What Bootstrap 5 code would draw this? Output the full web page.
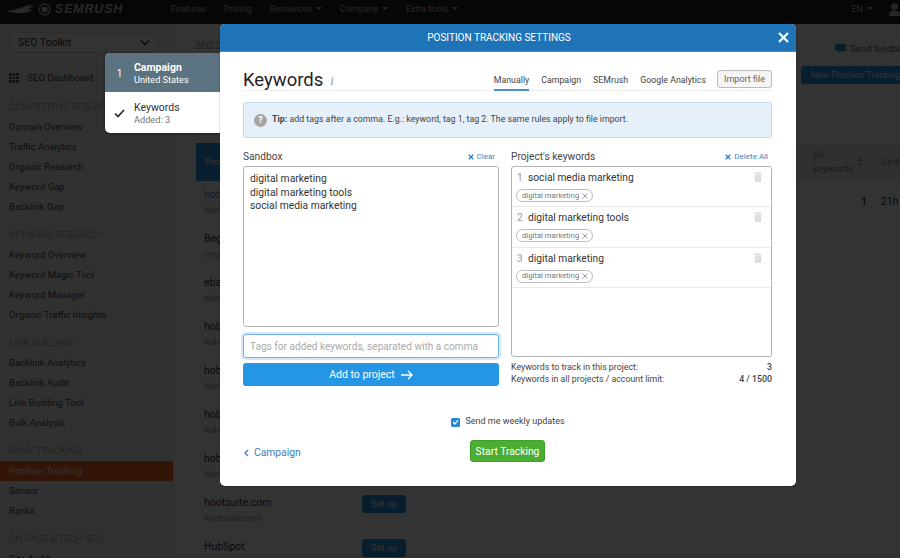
<!DOCTYPE html>
<html lang="en"><head><meta charset="utf-8"><title>Position Tracking Settings</title>
<link href="https://cdn.jsdelivr.net/npm/bootstrap@5.3.0/dist/css/bootstrap.min.css" rel="stylesheet">
<style>
html,body{height:558px;overflow:hidden}
body{font-family:Roboto,"Noto Sans",sans-serif;font-size:10.5px;color:#333;background:#fff;position:relative}
.topbar{height:24px;background:#1e1e1e;color:#c4c4c4;padding:0 0 5px 5px;font-size:9px}
.brand{font-family:"Liberation Sans",sans-serif;font-style:italic;font-weight:700;font-size:12.5px;letter-spacing:.8px;color:#c4c4c4;width:166px}
.topnav{gap:18px}
.caret-mini::after{content:"";display:inline-block;margin-left:4px;border:3px solid transparent;border-top-color:currentColor;vertical-align:-1px}
.shell{height:534px}
.sidebar{width:174px;background:#f6f6f6;border-right:1px solid #e8e8e8;padding:8px 0 0;flex:none}
.toolkit{margin:0 16px 0 9px;height:21px;background:#fff;border:1px solid #ddd;border-radius:3px;padding:0 6px 0 8px;font-size:10.5px}
.side-dash{height:20px;margin:15px 0 9px;padding-left:9px;gap:9px;font-size:9.5px}
.dash-ico{display:grid;grid-template-columns:repeat(3,2.5px);gap:1px}
.dash-ico i{width:2.5px;height:2.5px;background:#555}
.side-head{height:20px;padding-left:9px;font-size:9.5px;color:#aaa;line-height:20px;white-space:nowrap;margin-top:8px}
.side-head.first{margin-top:0}
.side-item{height:20px;line-height:20px;padding-left:9px;font-size:9.5px;color:#444;white-space:nowrap}
.side-item.on{background:#ff642d;color:#fff;margin-right:-1px;width:173px}
.content{flex:1;min-width:0;padding-left:22px;position:relative;overflow:hidden}
.crumb{height:20px;margin-top:16px;font-size:9px;color:#999}
.feedback{color:#666;font-size:9.5px;gap:4px;height:20px;margin-top:15px;margin-left:auto;width:65px;white-space:nowrap;flex:none}
.feedback svg{flex:none}
.newbtn{background:#2595e6;color:#fff;border-radius:3px 0 0 3px;height:18px;width:99px;line-height:18px;padding-left:10px;font-size:9px;white-space:nowrap;margin:6px 0 0 auto}
.headrow{background:#f1f1f1;height:38px;margin:59px 0 0 0}
.headcell{background:#2595e6;color:#fff;width:60px;padding-left:9px;font-size:9.5px;line-height:38px}
.keys-head{margin-left:auto;width:68px;line-height:14px;color:#888;font-size:9.5px;gap:4px}
.upd{width:19px;color:#888;font-size:9.5px;white-space:nowrap;overflow:hidden}
.site-row{height:44px;border-bottom:1px solid #f0f0f0;padding:6px 0 0 8px;overflow:hidden}
.site-name{font-size:10.5px;color:#333;line-height:16px;width:158px}
.site-sub{font-size:9px;color:#999;line-height:14px}
.setup{background:#2595e6;color:#fff;border-radius:3px;height:18px;width:44px;font-size:9.5px;line-height:18px;text-align:center}
.row-end{gap:14px;padding-top:7px}
.row-upd{width:19px;overflow:hidden;white-space:nowrap}
.dim{position:absolute;inset:0;background:rgba(0,0,0,.8)}
.steps{position:absolute;left:105px;top:53px;width:120px;height:80px;background:#fff;border-radius:5px;overflow:hidden;box-shadow:0 1px 3px rgba(0,0,0,.4)}
.step{height:39px;line-height:12px;font-size:10.5px;padding-top:2px}
.step+.step{height:41px}
.step small{font-size:9.2px}
.step-on{background:#5b7280;color:#fff}
.step-mark{width:29px;text-align:center;flex:none;font-size:10px}
.dialog{position:absolute;left:220px;top:24px;width:576px;height:462px;background:#fff;border-radius:5px;box-shadow:0 0 1px #000;overflow:hidden}
.dialog-top{height:28px;background:#1f73b7;color:#fff;position:relative;font-size:10px;padding-right:18px;border-bottom:1px solid #3d8ccc}
.closer{position:absolute;right:6px;top:7px;width:13px;height:13px}
.dialog-body{padding:0 24px 0 23px}
.title-row{height:39px;border-bottom:1px solid #eee}
.title-txt{font-size:18.5px;line-height:24px;margin-top:16px;color:#222}
.title-i{font-family:"Liberation Serif",serif;font-style:italic;color:#999;font-size:13px;margin-left:7px;margin-top:19px}
.tab-wrap{margin-left:auto;gap:12px;font-size:8.8px;height:38px;color:#444}
.tab-one{line-height:15px;padding-top:20.5px;height:39px;white-space:nowrap}
.tab-on{border-bottom:2px solid #4b8fd0}
.importer{border:1px solid #bbb;background:#f5f5f5;border-radius:3px;height:18px;width:55px;font-size:9px;line-height:16px;text-align:center;margin:18px 0 0 -1px;color:#666}
.tip{margin-top:11px;height:36px;background:#e5f0fb;border:1px solid #c0dcf5;border-radius:2px;padding-left:10px;gap:5px;font-size:8.8px;color:#444}
.tip-ico{width:13px;height:13px;border-radius:50%;background:#a5a5a5;color:#fff;font-size:9px;font-weight:700;text-align:center;line-height:13px}
.cols{gap:12px;margin-top:9px}
.left-col{width:256px}
.right-col{width:261px}
.lbl-row{height:19px;font-size:10.2px;color:#444;align-items:center}
.clr{margin-left:auto;color:#3b84c4;font-size:8px;gap:3px;margin-right:4px}
.sandbox{display:block;width:100%;height:161px;border:1px solid #b5b5b5;border-radius:3px;padding:5px 6px;font-size:10.3px;line-height:13.7px;color:#333;resize:none;margin:0;font-family:inherit}
.taginput{width:100%;height:24px;margin-top:7px;border:1px solid #6fb2ea;box-shadow:0 0 0 2px #d6e9fa;border-radius:3px;padding:0 6px;font-size:10.1px;color:#333;font-family:inherit}
.taginput::placeholder{color:#aaa;opacity:1}
.addbtn{width:100%;height:23px;margin-top:5px;background:#2595e6;border:0;border-radius:3px;color:#fff;font-size:10.5px;padding:0;gap:6px}
.kwbox{height:191px;border:1px solid #b5b5b5;border-radius:3px;overflow:hidden}
.kw-row{height:40.3px;border-bottom:1px solid #eaeaea;padding:4px 4px;position:relative}
.kw-top{line-height:14px;font-size:10.2px;color:#333}
.kw-n{color:#999;width:12px;padding-left:1px}
.trash{position:absolute;right:9px;top:5px}
.tagpill{display:inline-flex;align-items:center;margin-top:4px;border:1px solid #bbb;border-radius:7px;height:13px;padding:0 4px 0 5px;font-size:7.7px;color:#777;gap:3px;line-height:1}
.stats{margin-top:4px;font-size:8.8px;line-height:12px;color:#444}
.send{margin-top:29px;height:14px;gap:5px;font-size:9px;color:#444;justify-content:center;padding-left:1px}
.chk{width:9px;height:9px;background:#2a87d8;border-radius:1.5px;display:flex;align-items:center;justify-content:center}
.foot{position:relative;margin-top:11px;height:22px}
.backlink{position:absolute;left:1px;top:5px;color:#3b7fb9;font-size:10.3px;gap:5px}
.starter{background:#4bae33;border:1px solid #3f9f2a;color:#fff;border-radius:3px;width:75px;height:22px;padding:0;font-size:10.3px;line-height:21px;display:block;margin-left:227px}
</style></head>
<body>
<header class="topbar d-flex align-items-center">
<div class="brand d-flex align-items-center gap-1">
<svg width="46" height="13" viewBox="0 0 46 13"><path d="M0 8.500C7 7.500 13 6 19 3.500c4-1.500 7-2 10-1.500-3 .5-5 1.500-6 2.500 2-.5 4-.5 6-.2-3 .5-5 1.500-6 2.500 2-.2 4 0 5.500 .5-3 .5-5 2-9 2.500-7 1-13 0-19.500-1.800z" fill="#c4c4c4"/><circle cx="39.500" cy="6.500" r="5.500" fill="none" stroke="#c4c4c4" stroke-width="1.300"/><circle cx="39.500" cy="6.500" r="3" fill="#c4c4c4"/></svg>
<span>SEMRUSH</span></div>
<nav class="topnav d-flex"><span>Features</span><span>Pricing</span><span class="caret-mini">Resources</span><span class="caret-mini">Company</span><span class="caret-mini">Extra tools</span></nav>
<div class="ms-auto d-flex align-items-center gap-3"><span class="caret-mini">EN</span><svg width="11" height="13" viewBox="0 0 11 13"><circle cx="5.500" cy="3.500" r="3.200" fill="#c4c4c4"/><path d="M0 13c0-4 2-5.500 5.500-5.500S11 9 11 13z" fill="#c4c4c4"/></svg></div>
</header>
<div class="shell d-flex">
<aside class="sidebar">
<div class="toolkit d-flex align-items-center justify-content-between"><span>SEO Toolkit</span><svg width="10" height="7" viewBox="0 0 10 7"><path d="M1 1.500l4 4 4-4" fill="none" stroke="#333" stroke-width="1.500"/></svg></div>
<div class="side-dash d-flex align-items-center"><span class="dash-ico"><i></i><i></i><i></i><i></i><i></i><i></i><i></i><i></i><i></i></span><span>SEO Dashboard</span></div>
<div class="side-head first">COMPETITIVE RESEARCH</div>
<div class="side-item">Domain Overview</div><div class="side-item">Traffic Analytics</div><div class="side-item">Organic Research</div><div class="side-item">Keyword Gap</div><div class="side-item">Backlink Gap</div>
<div class="side-head">KEYWORD RESEARCH</div>
<div class="side-item">Keyword Overview</div><div class="side-item">Keyword Magic Tool</div><div class="side-item">Keyword Manager</div><div class="side-item">Organic Traffic Insights</div>
<div class="side-head">LINK BUILDING</div>
<div class="side-item">Backlink Analytics</div><div class="side-item">Backlink Audit</div><div class="side-item">Link Building Tool</div><div class="side-item">Bulk Analysis</div>
<div class="side-head">RANK TRACKING</div>
<div class="side-item on">Position Tracking</div><div class="side-item">Sensor</div><div class="side-item">Ranks</div>
<div class="side-head">ON PAGE &amp; TECH SEO</div>
<div class="side-item">Site Audit</div>
</aside>
<main class="content">
<div class="d-flex"><div class="crumb">SEO Dashboard</div><div class="feedback d-flex align-items-center"><svg width="11" height="10" viewBox="0 0 11 10"><path d="M0 0h11v7H6L4 9.500V7H0z" fill="#3f8fd0"/></svg><span>Send feedback</span></div></div>
<div class="newbtn">New Position Tracking</div>
<div class="headrow d-flex align-items-center"><div class="headcell">Projects</div><div class="keys-head d-flex align-items-center"><span>All<br>keywords</span><svg width="6" height="10" viewBox="0 0 6 10"><path d="M3 0l3 4H0zM3 10L0 6h6z" fill="#aaa"/></svg></div><div class="upd">Updated</div></div>
<div class="site-row d-flex"><div><div class="site-name" style="color:#2595e6">hobbii.com</div><div class="site-sub">hobbii.com</div></div><div class="ms-auto d-flex row-end"><b>1</b><span class="row-upd">21h ago</span></div></div>
<div class="site-row"><div class="site-name">Beginner</div><div class="site-sub">beginner.com</div></div>
<div class="site-row"><div class="site-name">ebay</div><div class="site-sub">ebay.com</div></div>
<div class="site-row"><div class="site-name">hobby</div><div class="site-sub">hobby.com</div></div>
<div class="site-row"><div class="site-name">hobby</div><div class="site-sub">hobby.com</div></div>
<div class="site-row"><div class="site-name">hobby</div><div class="site-sub">hobby.com</div></div>
<div class="site-row"><div class="site-name">hobby</div><div class="site-sub">hobby.com</div></div>
<div class="site-row d-flex"><div><div class="site-name">hootsuite.com</div><div class="site-sub">hootsuite.com</div></div><div class="setup">Set up</div></div>
<div class="site-row d-flex"><div><div class="site-name">HubSpot</div><div class="site-sub">hubspot.com</div></div><div class="setup">Set up</div></div>
</main>
</div>
<div class="dim"></div>
<div class="steps">
<div class="step step-on d-flex align-items-center"><span class="step-mark">1</span><div><b>Campaign</b><br><small>United States</small></div></div>
<div class="step d-flex align-items-center"><span class="step-mark"><svg width="11" height="9" viewBox="0 0 11 9"><path d="M1 4.500l3 3 6-6.500" fill="none" stroke="#222" stroke-width="1.600"/></svg></span><div>Keywords<br><small class="text-secondary">Added: 3</small></div></div>
</div>
<section class="dialog">
<div class="dialog-top d-flex align-items-center justify-content-center"><span>POSITION TRACKING SETTINGS</span><svg class="closer" viewBox="0 0 13 13"><path d="M2 2l9 9M11 2l-9 9" stroke="#fff" stroke-width="2.200"/></svg></div>
<div class="dialog-body">
<div class="title-row d-flex"><div class="title-txt">Keywords</div><div class="title-i">i</div>
<div class="tab-wrap d-flex"><div class="tab-one tab-on">Manually</div><div class="tab-one">Campaign</div><div class="tab-one">SEMrush</div><div class="tab-one">Google Analytics</div><div class="importer">Import file</div></div></div>
<div class="tip d-flex align-items-center"><span class="tip-ico">?</span><span><b>Tip:</b> add tags after a comma. E.g.: keyword, tag 1, tag 2. The same rules apply to file import.</span></div>
<div class="cols d-flex">
<div class="left-col">
<div class="lbl-row d-flex"><span>Sandbox</span><span class="clr d-flex align-items-center"><svg width="6" height="6" viewBox="0 0 6 6"><path d="M.7.7l4.600 4.600M5.300.7L.7 5.300" stroke="#2f7fc4" stroke-width="1.300"/></svg>Clear</span></div>
<textarea class="sandbox" aria-label="Sandbox">digital marketing
digital marketing tools
social media marketing</textarea>
<input class="taginput" placeholder="Tags for added keywords, separated with a comma" aria-label="Tags">
<button class="addbtn d-flex align-items-center justify-content-center">Add to project <svg width="12" height="10" viewBox="0 0 12 10"><path d="M0 5h10.500M7 1l4 4-4 4" fill="none" stroke="#fff" stroke-width="1.400"/></svg></button>
</div>
<div class="right-col">
<div class="lbl-row d-flex"><span>Project's keywords</span><span class="clr d-flex align-items-center"><svg width="6" height="6" viewBox="0 0 6 6"><path d="M.7.7l4.600 4.600M5.300.7L.7 5.300" stroke="#2f7fc4" stroke-width="1.300"/></svg>Delete All</span></div>
<div class="kwbox">
<div class="kw-row"><div class="kw-top d-flex"><span class="kw-n">1</span><span>social media marketing</span></div><span class="tagpill">digital marketing <svg width="6" height="6" viewBox="0 0 6 6"><path d="M.5.5l5 5M5.500.5l-5 5" stroke="#888" stroke-width=".8"/></svg></span><svg class="trash" width="8" height="10" viewBox="0 0 8 10"><path d="M0 1h8v1H0zM3 0h2v1H3zM.8 2.500h6.400V10H.8z" fill="#ddd"/></svg></div>
<div class="kw-row"><div class="kw-top d-flex"><span class="kw-n">2</span><span>digital marketing tools</span></div><span class="tagpill">digital marketing <svg width="6" height="6" viewBox="0 0 6 6"><path d="M.5.5l5 5M5.500.5l-5 5" stroke="#888" stroke-width=".8"/></svg></span><svg class="trash" width="8" height="10" viewBox="0 0 8 10"><path d="M0 1h8v1H0zM3 0h2v1H3zM.8 2.500h6.400V10H.8z" fill="#ddd"/></svg></div>
<div class="kw-row"><div class="kw-top d-flex"><span class="kw-n">3</span><span>digital marketing</span></div><span class="tagpill">digital marketing <svg width="6" height="6" viewBox="0 0 6 6"><path d="M.5.5l5 5M5.500.5l-5 5" stroke="#888" stroke-width=".8"/></svg></span><svg class="trash" width="8" height="10" viewBox="0 0 8 10"><path d="M0 1h8v1H0zM3 0h2v1H3zM.8 2.500h6.400V10H.8z" fill="#ddd"/></svg></div>
</div>
<div class="stats"><div class="d-flex justify-content-between"><span>Keywords to track in this project:</span><b class="fw-medium">3</b></div><div class="d-flex justify-content-between"><span>Keywords in all projects / account limit:</span><b class="fw-medium">4 / 1500</b></div></div>
</div>
</div>
<div class="send d-flex align-items-center"><span class="chk"><svg width="7" height="6" viewBox="0 0 7 6"><path d="M1 3l2 2 3-4" fill="none" stroke="#fff" stroke-width="1.200"/></svg></span><span>Send me weekly updates</span></div>
<div class="foot"><span class="backlink d-flex align-items-center"><svg width="5" height="8" viewBox="0 0 5 8"><path d="M4 1L1 4l3 3" fill="none" stroke="#2f7fc4" stroke-width="1.300"/></svg>Campaign</span><button class="starter">Start Tracking</button></div>
</div>
</section>
<script src="https://cdn.jsdelivr.net/npm/bootstrap@5.3.0/dist/js/bootstrap.bundle.min.js"></script>
</body></html>
